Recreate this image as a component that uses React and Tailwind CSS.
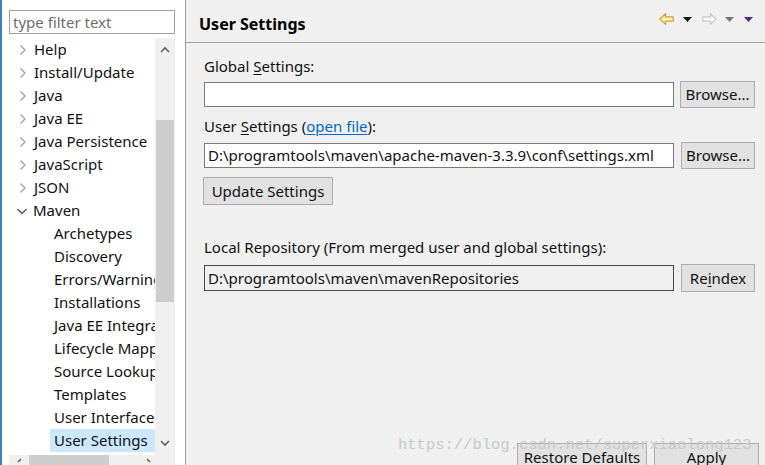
import React from 'react';

const topItems = ['Help', 'Install/Update', 'Java', 'Java EE', 'Java Persistence', 'JavaScript', 'JSON'];
const mavenItems = [
    'Archetypes',
    'Discovery',
    'Errors/Warnings',
    'Installations',
    'Java EE Integration',
    'Lifecycle Mappings',
    'Source Lookup',
    'Templates',
    'User Interface',
    'User Settings',
];

function Chevron({ open }) {
    return (
        <svg width="10" height="10" viewBox="0 0 10 10" className="shrink-0">
            {open ? (
                <path d="M0.5 3l4.5 4.5 4.5-4.5" fill="none" stroke="#555" strokeWidth="1.4" />
            ) : (
                <path d="M2.5 0.5l4.5 4.5-4.5 4.5" fill="none" stroke="#a6a6a6" strokeWidth="1.4" />
            )}
        </svg>
    );
}

function Tri({ color }) {
    return (
        <svg width="9" height="5" viewBox="0 0 9 5" className="shrink-0">
            <path d="M0 0h9L4.5 5z" fill={color} />
        </svg>
    );
}

function Btn({ children, className = '' }) {
    return (
        <button className={"border border-[#adadad] bg-[#e1e1e1] text-[15px] text-[#111] leading-none " + className}>
            {children}
        </button>
    );
}

export default function App() {
    return (
        <div className="w-[765px] h-[465px] flex overflow-hidden bg-[#f0f0f0] relative font-['Noto_Sans',sans-serif] text-[#111]">
            {/* Left: filter + tree */}
            <div className="w-[185px] shrink-0 bg-white border-l-2 border-[#3d7fc1] flex flex-col">
                <div className="pt-[10px] pl-[7px]">
                    <input
                        type="text"
                        placeholder="type filter text"
                        className="w-[166px] h-[24px] border border-[#a0a0a0] px-[3px] text-[15px] placeholder:text-[#6d6d6d] outline-none"
                    />
                </div>
                <div className="flex mt-[4px] h-[419px] pl-[7px]">
                    <div className="w-[146px] overflow-hidden">
                        {topItems.map((t) => (
                            <div key={t} className="h-[23px] flex items-center gap-[6px] pl-[9px] text-[15px] whitespace-nowrap">
                                <Chevron />
                                <span>{t}</span>
                            </div>
                        ))}
                        <div className="h-[23px] flex items-center gap-[6px] pl-[8px] text-[15px]">
                            <Chevron open />
                            <span>Maven</span>
                        </div>
                        {mavenItems.map((t) => (
                            <div key={t} className="h-[23px] flex items-center pl-[45px] text-[15px] whitespace-nowrap">
                                <span className={t === 'User Settings' ? 'bg-[#cce8ff] pl-[4px] -ml-[4px] h-[23px] flex items-center w-[105px]' : ''}>
                                    {t}
                                </span>
                            </div>
                        ))}
                    </div>
                    {/* vertical scrollbar */}
                    <div className="w-[20px] bg-[#f0f0f0] flex flex-col items-center">
                        <svg width="10" height="24" viewBox="0 0 10 24">
                            <path d="M1 14l4-4 4 4" fill="none" stroke="#606060" strokeWidth="1.6" />
                        </svg>
                        <div className="w-[18px] h-[182px] mt-[58px] bg-[#cdcdcd]" />
                        <div className="flex-1" />
                        <svg width="10" height="24" viewBox="0 0 10 24">
                            <path d="M1 10l4 4 4-4" fill="none" stroke="#606060" strokeWidth="1.6" />
                        </svg>
                    </div>
                </div>
                {/* horizontal scrollbar */}
                <div className="ml-[7px] w-[166px] h-[10px] bg-[#f0f0f0] flex items-start">
                    <svg width="20" height="10" viewBox="0 0 20 10" className="shrink-0">
                        <path d="M12 4l-3 3" fill="none" stroke="#606060" strokeWidth="1.6" />
                    </svg>
                    <div className="w-[80px] h-[10px] bg-[#cdcdcd]" />
                    <div className="flex-1" />
                    <svg width="30" height="10" viewBox="0 0 30 10" className="shrink-0">
                        <path d="M2 4l3 3" fill="none" stroke="#606060" strokeWidth="1.6" />
                    </svg>
                </div>
            </div>

            <div className="w-px bg-[#a0a0a0] shrink-0" />

            {/* Right: preference page */}
            <div className="flex-1 flex flex-col">
                <div className="h-[43px] border-b border-[#a0a0a0] flex items-center pl-[13px] pr-[12px]">
                    <span className="font-bold text-[16px] text-black mt-[6px]">User Settings</span>
                    <div className="flex-1" />
                    <div className="flex items-center -mt-[4px]">
                        <svg width="15" height="12" viewBox="0 0 15 12">
                            <path d="M6.5 0.8L0.8 6l5.7 5.2V8.2h7.7V3.8H6.5z" fill="#fff1c4" stroke="#d4a02a" strokeWidth="1.2" />
                        </svg>
                        <div className="ml-[9px]"><Tri color="#111" /></div>
                        <svg width="15" height="12" viewBox="0 0 15 12" className="ml-[10px]">
                            <path d="M8.5 0.8L14.2 6l-5.7 5.2V8.2H0.8V3.8h7.7z" fill="#fafafa" stroke="#c8c8c8" strokeWidth="1.2" />
                        </svg>
                        <div className="ml-[8px]"><Tri color="#777" /></div>
                        <div className="ml-[10px]"><Tri color="#4b2f7a" /></div>
                    </div>
                </div>

                <div className="pl-[18px] pr-[10px] text-[15px]">
                    <div className="mt-[12px] h-[22px] leading-[22px]">
                        Global <span className="underline underline-offset-2">S</span>ettings:
                    </div>
                    <div className="flex items-center gap-[6px] mt-[4px]">
                        <div className="w-[470px] h-[25px] bg-white border border-[#7a7a7a]" />
                        <Btn className="w-[75px] h-[27px]">Browse...</Btn>
                    </div>

                    <div className="mt-[7px] h-[22px] leading-[22px]">
                        User <span className="underline underline-offset-2">S</span>ettings (<span className="text-[#0066cc] underline underline-offset-2">open file</span>):
                    </div>
                    <div className="flex items-center gap-[7px] mt-[5px]">
                        <div className="w-[470px] h-[25px] bg-white border border-[#7a7a7a] flex items-center pl-[3px] whitespace-nowrap overflow-hidden">
                            D:\programtools\maven\apache-maven-3.3.9\conf\settings.xml
                        </div>
                        <Btn className="w-[74px] h-[27px]">Browse...</Btn>
                    </div>
                    <Btn className="w-[130px] h-[28px] mt-[8px] -ml-[1px]">Update Settings</Btn>

                    <div className="mt-[31px] h-[22px] leading-[22px]">
                        Local Repository (From merged user and global settings):
                    </div>
                    <div className="flex items-center gap-[7px] mt-[6px]">
                        <div className="w-[470px] h-[26px] border border-[#4a4a4a] flex items-center pl-[3px] whitespace-nowrap">
                            D:\programtools\maven\mavenRepositories
                        </div>
                        <Btn className="w-[74px] h-[28px]">
                            Re<span className="underline underline-offset-2">i</span>ndex
                        </Btn>
                    </div>
                </div>

                <div className="flex-1" />
                <div className="flex justify-end gap-[7px] pr-[6px] -mb-[6px]">
                    <Btn className="w-[130px] h-[28px] pt-[1px]">
                        Restore <span className="underline underline-offset-2">D</span>efaults
                    </Btn>
                    <Btn className="w-[105px] h-[28px] pt-[1px]">
                        <span className="underline underline-offset-2">A</span>pply
                    </Btn>
                </div>
            </div>

            {/* blog watermark */}
            <div className="absolute left-[398px] top-[435px] text-[15.5px] leading-[20px] text-[#c8c8c8] font-['Liberation_Mono',monospace] pointer-events-none whitespace-nowrap">
                https://blog.csdn.net/superxiaolong123
            </div>
        </div>
    );
}
